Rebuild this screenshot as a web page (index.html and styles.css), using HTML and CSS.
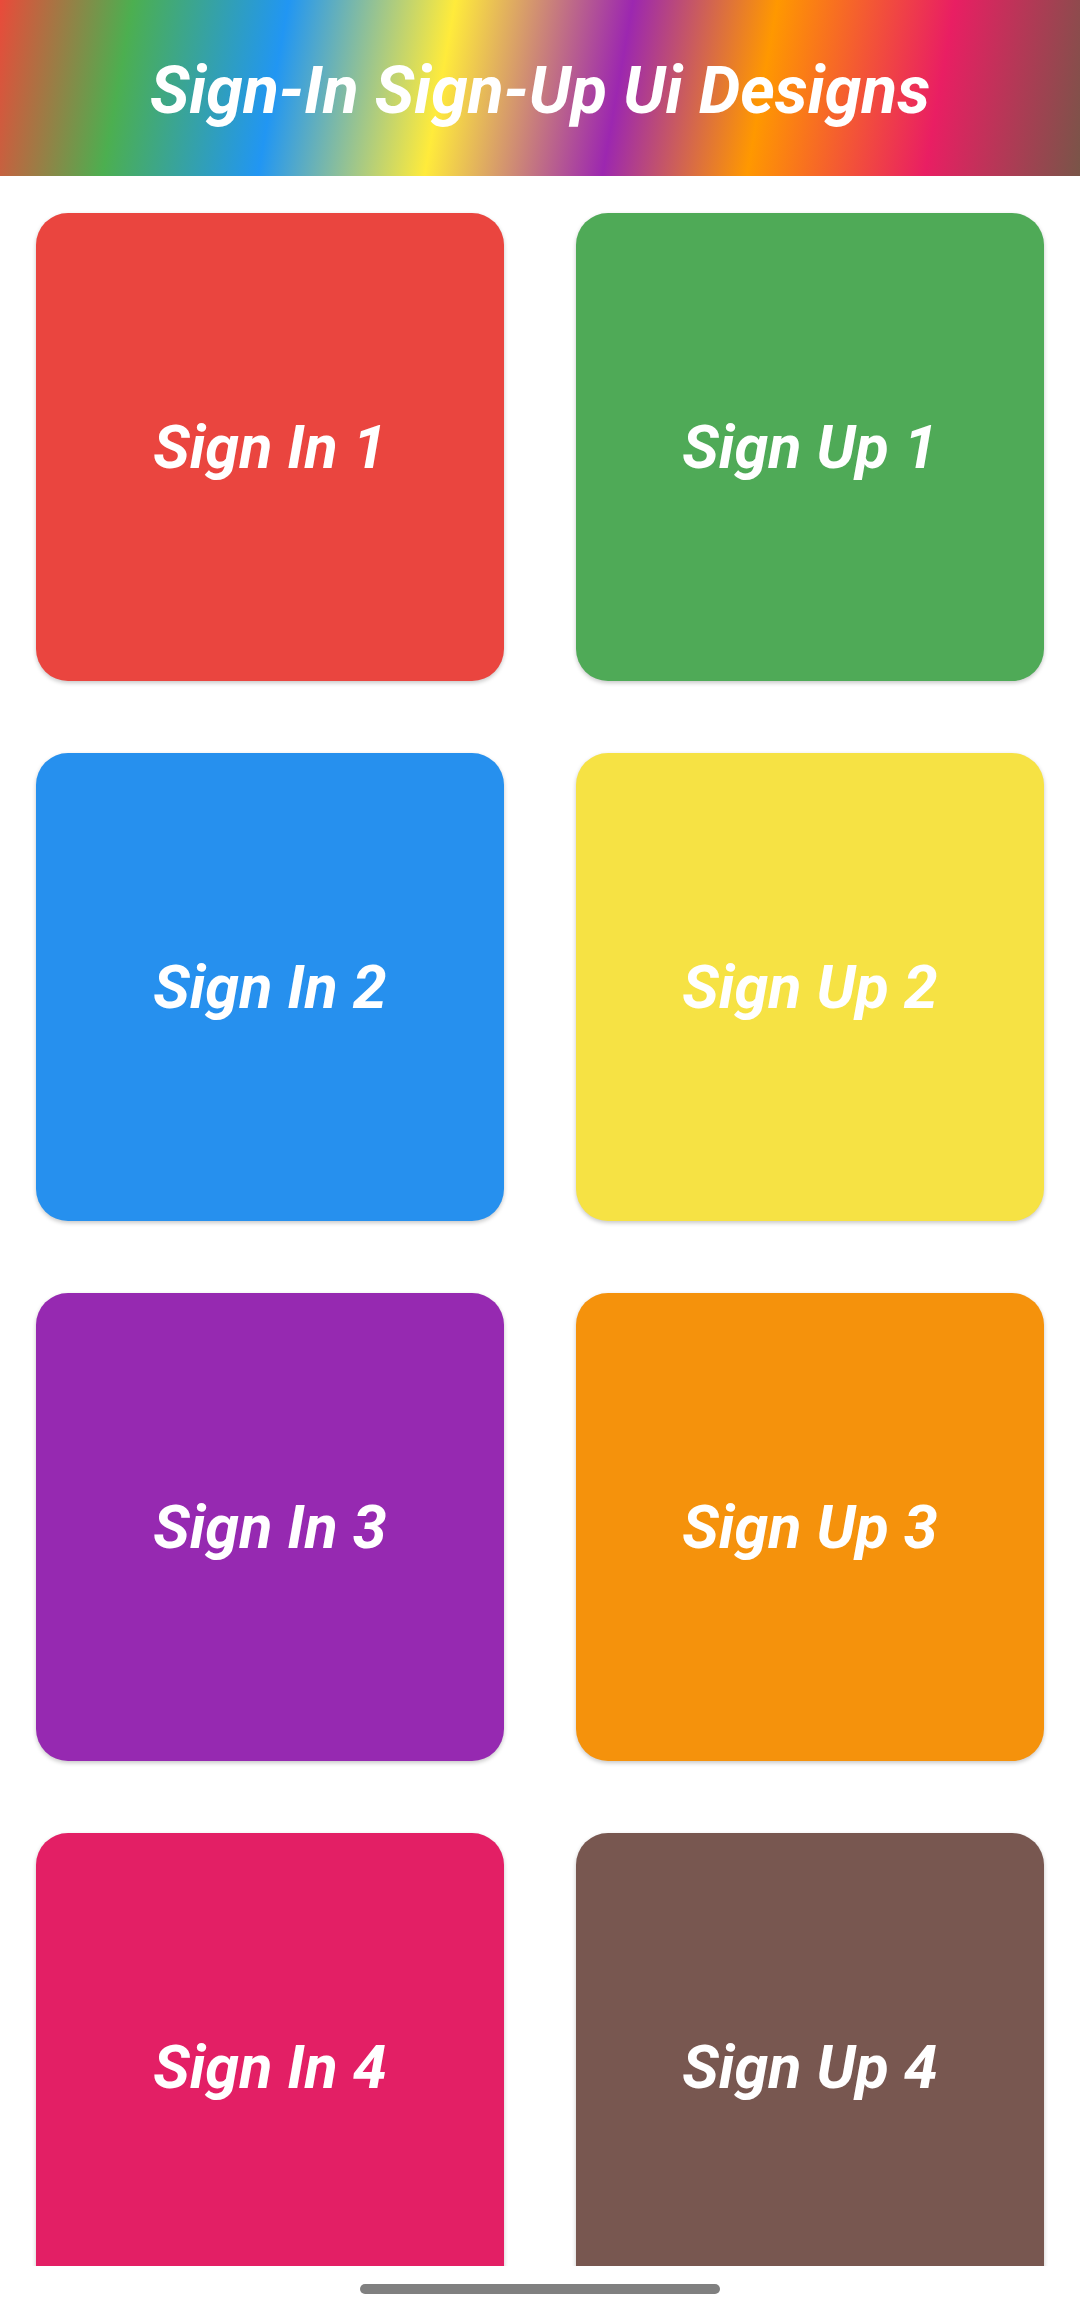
FILE: index.html
```html
<!DOCTYPE html>
<html lang="en">
<head>
<meta charset="utf-8">
<title>Sign-In Sign-Up Ui Designs</title>
<link rel="stylesheet" href="styles.css">
</head>
<body>
<div class="screen">
  <header class="appbar">
    <h1 class="title">Sign-In Sign-Up Ui Designs</h1>
  </header>
  <main class="content">
    <div class="grid">
      <div class="card red"><span>Sign In 1</span></div>
      <div class="card green"><span>Sign Up 1</span></div>
      <div class="card blue"><span>Sign In 2</span></div>
      <div class="card yellow"><span>Sign Up 2</span></div>
      <div class="card purple"><span>Sign In 3</span></div>
      <div class="card orange"><span>Sign Up 3</span></div>
      <div class="card pink"><span>Sign In 4</span></div>
      <div class="card brown"><span>Sign Up 4</span></div>
    </div>
  </main>
  <footer class="navbar">
    <div class="handle"></div>
  </footer>
</div>
</body>
</html>
```

FILE: styles.css
```css
* { box-sizing: border-box; }
html, body {
  margin: 0;
  padding: 0;
  background: #ffffff;
}
.screen {
  width: 1080px;
  height: 2314px;
  display: flex;
  flex-direction: column;
  overflow: hidden;
  font-family: Roboto, "Noto Sans", "Liberation Sans", sans-serif;
}
.appbar {
  height: 176px;
  flex: 0 0 176px;
  display: flex;
  align-items: center;
  justify-content: center;
  background: linear-gradient(100deg,
    #ea4a3a 0%,
    #4caf50 12%,
    #2196f3 26%,
    #ffeb3b 41%,
    #9c27b0 57%,
    #ff9800 70%,
    #e91e63 86%,
    #795548 100%);
}
.title {
  margin: 0;
  color: #ffffff;
  font-size: 66px;
  font-weight: 700;
  font-style: italic;
  letter-spacing: 0;
  line-height: 1;
  padding-top: 6px;
}
.content {
  flex: 0 0 2090px;
  height: 2090px;
  overflow: hidden;
  padding: 37px 36px 0 36px;
}
.grid {
  display: grid;
  grid-template-columns: 468px 468px;
  grid-auto-rows: 468px;
  column-gap: 72px;
  row-gap: 72px;
}
.card {
  border-radius: 32px;
  display: flex;
  align-items: center;
  justify-content: center;
  box-shadow: 0 2px 4px rgba(0,0,0,0.22);
}
.card span {
  color: #ffffff;
  font-size: 61px;
  font-weight: 700;
  font-style: italic;
  line-height: 1;
}
.red { background: #ea453f; }
.green { background: #4faa57; }
.blue { background: #2690ee; }
.yellow { background: #f6e244; }
.purple { background: #9629b1; }
.orange { background: #f5920c; }
.pink { background: #e31f65; }
.brown { background: #785750; }
.navbar {
  flex: 0 0 48px;
  height: 48px;
  background: #ffffff;
  display: flex;
  justify-content: center;
  padding-top: 18px;
}
.handle {
  width: 360px;
  height: 10px;
  border-radius: 5px;
  background: #808080;
}
```
